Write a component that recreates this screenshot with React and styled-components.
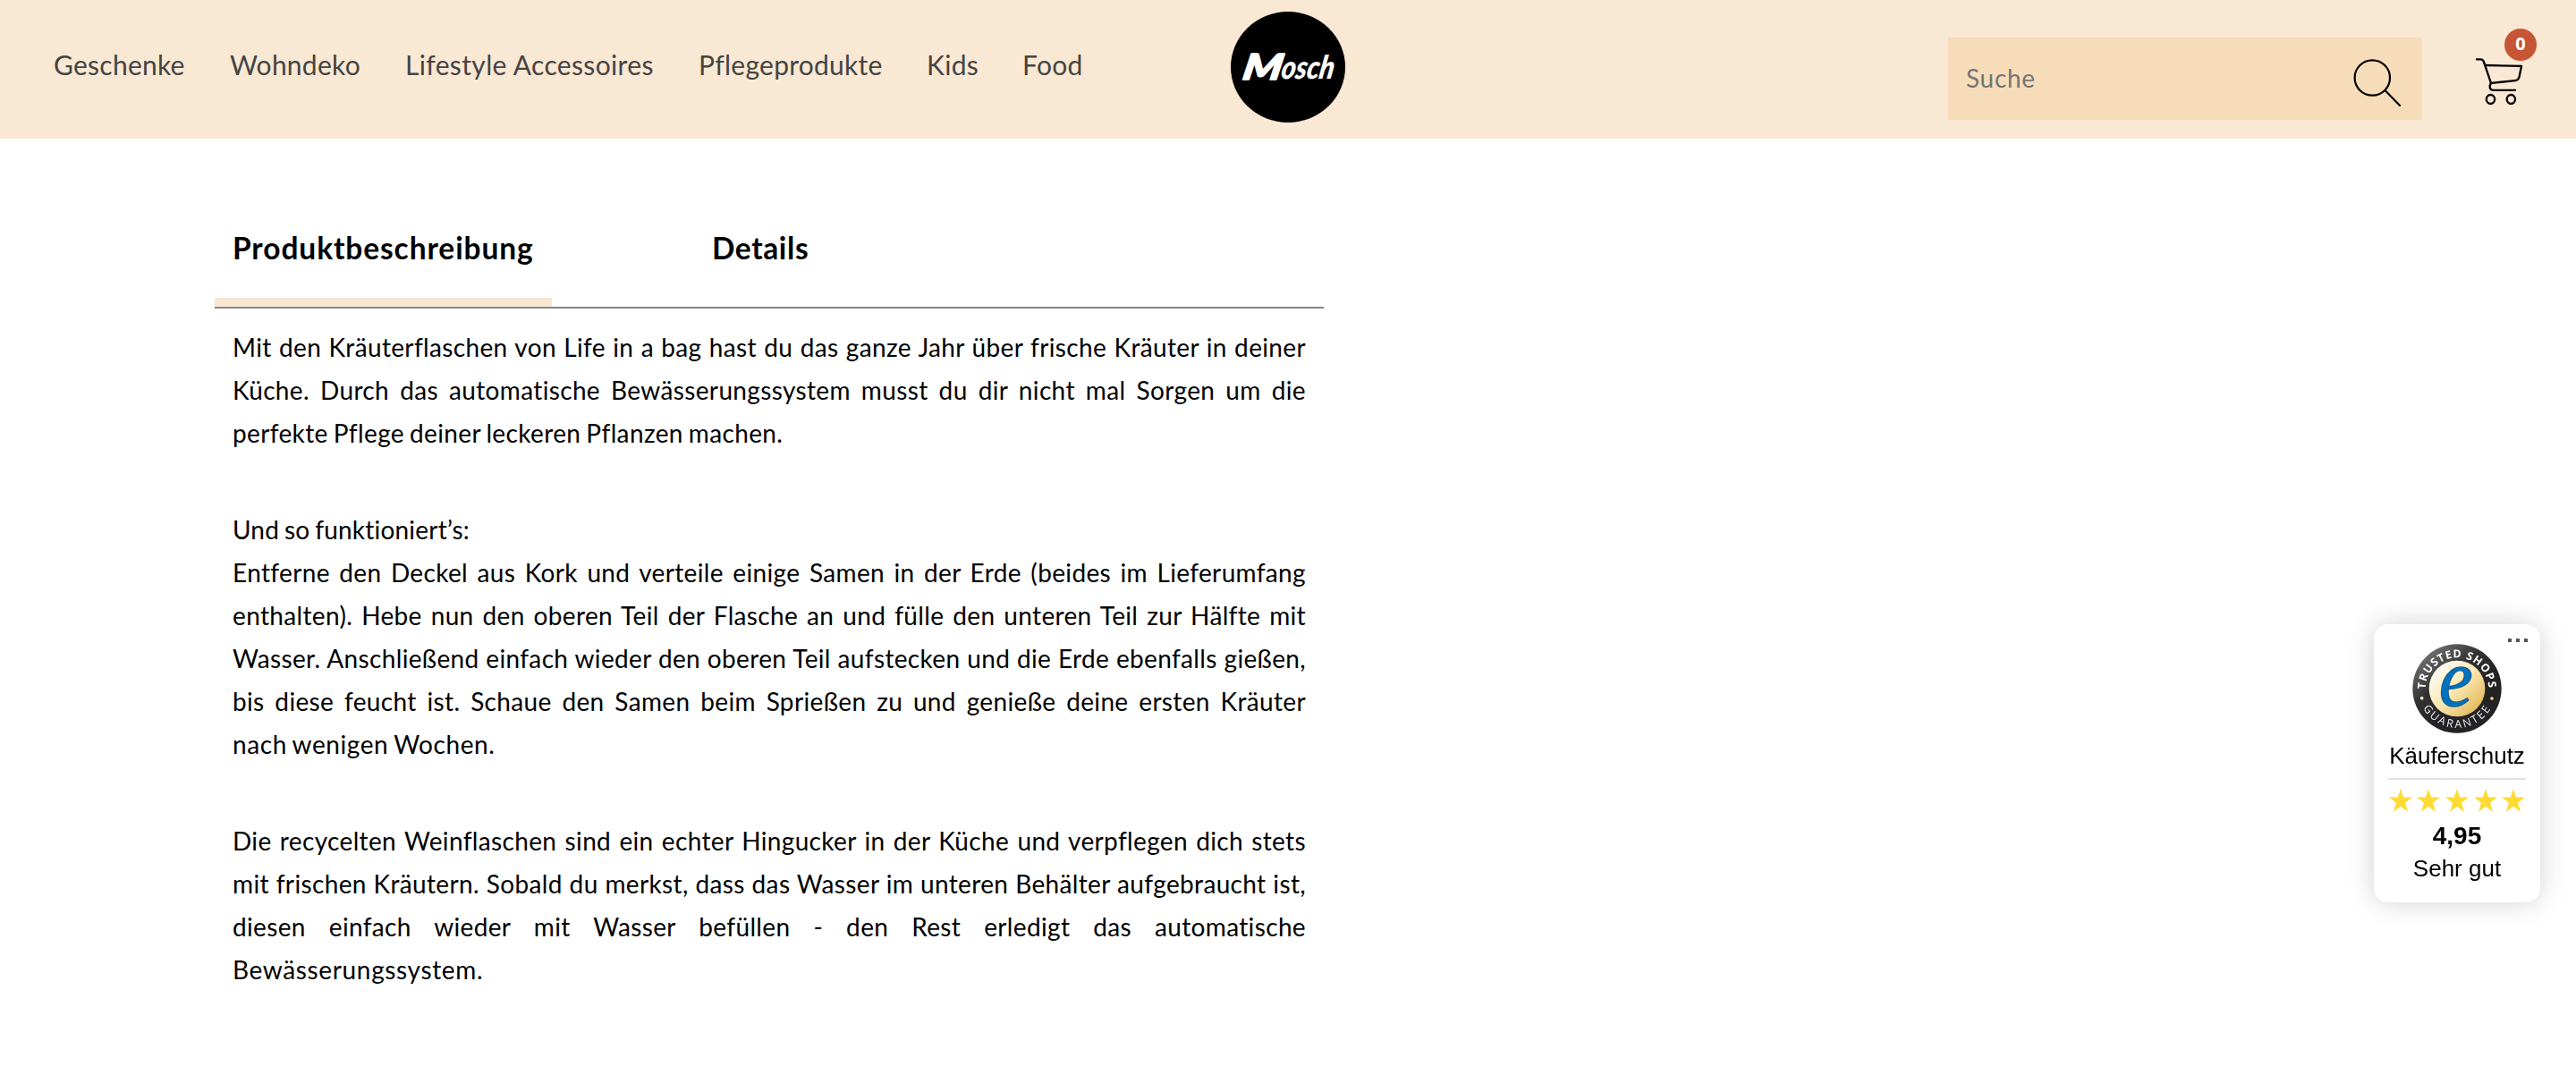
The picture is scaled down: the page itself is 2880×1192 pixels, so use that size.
import React from "react";
import styled, { createGlobalStyle } from "styled-components";

const GlobalStyle = createGlobalStyle`
  *, *::before, *::after { box-sizing: border-box; }
  body {
    margin: 0;
    background: #fff;
    color: #000;
    font-family: Lato, "Open Sans", sans-serif;
  }
`;

const Page = styled.div`
  min-height: 1192px;
`;

const Header = styled.header`
  display: grid;
  grid-template-columns: 1fr 128px 1fr;
  height: 155px;
  background: #f9e8d3;
`;

const Nav = styled.nav`
  display: grid;
  grid-template-columns: 197px 196px 328px 255px 107px 80px;
  align-self: start;
  padding: 48px 0 0 60px;
`;

const NavLink = styled.a`
  color: #444;
  font-size: 30px;
  line-height: 48px;
  letter-spacing: ${(p) => p.$spacing}px;
  white-space: nowrap;
`;

const LogoLink = styled.a`
  display: block;
  height: 124px;
  margin-top: 13px;
`;

const Tools = styled.div`
  display: flex;
  justify-content: flex-end;
  align-items: flex-start;
  padding: 42px 57px 0 0;
`;

const SearchBox = styled.form`
  display: flex;
  align-items: center;
  justify-content: space-between;
  width: 530px;
  height: 92px;
  margin-right: 59px;
  padding: 0 22px 0 20px;
  background: #f7dcba;
`;

const SearchInput = styled.input`
  flex: 1;
  min-width: 0;
  height: 40px;
  margin-bottom: 2px;
  padding: 0;
  border: 0;
  outline: 0;
  background: transparent;
  font: 400 28px Lato, sans-serif;
  letter-spacing: 0.7px;
  &::placeholder { color: #757575; opacity: 1; }
`;

const SearchIcon = styled.svg`
  width: 56px;
  height: 56px;
  margin-top: 8px;
`;

const Cart = styled.a`
  position: relative;
  width: 56px;
  height: 56px;
  margin-top: 21px;
`;

const CartBadge = styled.span`
  position: absolute;
  top: -31px;
  right: -13px;
  display: flex;
  align-items: center;
  justify-content: center;
  width: 36px;
  height: 36px;
  border-radius: 50%;
  background: #c65536;
  color: #fff;
  font: 700 20px/34px "Open Sans", sans-serif;
  padding-bottom: 2px;
`;

const Product = styled.main`
  width: 1240px;
  margin: 0 0 0 240px;
  padding-top: 83px;
`;

const Tabs = styled.div`
  display: flex;
  height: 107px;
  gap: 159px;
  border-bottom: 2px solid #868686;
`;

const Tab = styled.button`
  width: ${(p) => p.$width}px;
  padding: 17px 20px 0;
  border: 0;
  border-bottom: 10px solid ${(p) => (p.$active ? "#f9e8d3" : "transparent")};
  background: none;
  color: #000;
  font: 700 33.5px/44px Lato, sans-serif;
  letter-spacing: ${(p) => p.$spacing}px;
  text-align: left;
  white-space: nowrap;
  display: flex;
  align-items: flex-start;
`;

const Description = styled.article`
  display: flex;
  flex-direction: column;
  gap: 60px;
  padding: 19px 20px 0;
`;

const Paragraph = styled.p`
  margin: 0;
  font-size: 28px;
  line-height: 48px;
`;

const Line = styled.span`
  display: block;
  letter-spacing: ${(p) => p.$spacing}px;
  word-spacing: -1.5px;
  white-space: nowrap;
  text-align: left;
  text-align-last: ${(p) => (p.$full ? "justify" : "left")};
`;

const TrustCard = styled.aside`
  position: fixed;
  top: 698px;
  right: 40px;
  display: flex;
  flex-direction: column;
  align-items: center;
  width: 186px;
  height: 311px;
  border-radius: 16px;
  background: #fff;
  box-shadow: 0 0 30px rgba(0, 0, 0, 0.18);
  font-family: "Liberation Sans", Arial, sans-serif;
`;

const Menu = styled.div`
  display: flex;
  align-self: flex-end;
  gap: 5px;
  height: 4px;
  margin: 16px 14px 0 0;
`;

const MenuDot = styled.i`
  width: 4px;
  height: 4px;
  background: #555;
`;

const Seal = styled.svg`
  width: 100px;
  height: 100px;
  margin-top: 2px;
`;

const SealCaption = styled.div`
  margin-top: 9px;
  font-size: 26px;
  line-height: 32px;
`;

const Divider = styled.hr`
  width: 154px;
  height: 2px;
  margin: 9px 0 10px;
  border: 0;
  background: #e1e1e1;
`;

const Stars = styled.div`
  display: flex;
  gap: 5.6px;
`;

const Star = styled.svg`
  width: 26px;
  height: 26px;
  fill: #ffdb33;
`;

const Score = styled.div`
  margin-top: 10px;
  font-size: 28px;
  font-weight: 700;
  line-height: 34px;
`;

const Grade = styled.div`
  margin-top: 3px;
  font-size: 26px;
  line-height: 32px;
`;

const links = [
  ["Geschenke", 0.25],
  ["Wohndeko", 0.25],
  ["Lifestyle Accessoires", 0.35],
  ["Pflegeprodukte", 0.25],
  ["Kids", 0.3],
  ["Food", 0.3],
];

const paragraphs = [
  [
    { text: "Mit den Kräuterflaschen von Life in a bag hast du das ganze Jahr über frische Kräuter in deiner", full: true },
    { text: "Küche. Durch das automatische Bewässerungssystem musst du dir nicht mal Sorgen um die", full: true },
    { text: "perfekte Pflege deiner leckeren Pflanzen machen.", spacing: 0.36 },
  ],
  [
    { text: "Und so funktioniert’s:", spacing: 0.2 },
    { text: "Entferne den Deckel aus Kork und verteile einige Samen in der Erde (beides im Lieferumfang", full: true },
    { text: "enthalten). Hebe nun den oberen Teil der Flasche an und fülle den unteren Teil zur Hälfte mit", full: true },
    { text: "Wasser. Anschließend einfach wieder den oberen Teil aufstecken und die Erde ebenfalls gießen,", full: true },
    { text: "bis diese feucht ist. Schaue den Samen beim Sprießen zu und genieße deine ersten Kräuter", full: true },
    { text: "nach wenigen Wochen.", spacing: 0.58 },
  ],
  [
    { text: "Die recycelten Weinflaschen sind ein echter Hingucker in der Küche und verpflegen dich stets", full: true },
    { text: "mit frischen Kräutern. Sobald du merkst, dass das Wasser im unteren Behälter aufgebraucht ist,", full: true },
    { text: "diesen einfach wieder mit Wasser befüllen - den Rest erledigt das automatische", full: true },
    { text: "Bewässerungssystem.", spacing: 0.64 },
  ],
];

function Logo() {
  return (
    <svg width="128" height="124" viewBox="0 0 128 124">
      <ellipse cx="64" cy="62" rx="64" ry="62" fill="#000" />
      <g
        fill="#fff"
        stroke="#fff"
        strokeLinejoin="round"
        fontFamily="Lato, sans-serif"
        fontStyle="italic"
        fontWeight="900"
        transform="translate(0 76) skewX(-10)"
      >
        <text x="12" y="0" fontSize="40" strokeWidth="1.6" textLength="44" lengthAdjust="spacingAndGlyphs">M</text>
        <text x="55" y="-1" fontSize="36" strokeWidth="0.2" textLength="59" lengthAdjust="spacingAndGlyphs">osch</text>
      </g>
    </svg>
  );
}

function CartIcon() {
  return (
    <svg width="56" height="56" viewBox="471 129 168 168" fill="none" stroke="#000" strokeWidth="7" strokeLinecap="round" strokeLinejoin="round">
      <path d="M477 139h14q7 0 10 9l24 71" />
      <path d="M507 159l120 2.5-7 35q-3 13-15 14l-78 8q-6 3-6 12 0 12 12 12h73" />
      <ellipse cx="523.5" cy="273" rx="14" ry="15" />
      <ellipse cx="592" cy="273" rx="14" ry="15" />
    </svg>
  );
}

function TrustSeal() {
  return (
    <Seal viewBox="-150 -150 300 300">
      <defs>
        <linearGradient id="ring" x1="0.15" y1="0.05" x2="0.6" y2="0.6">
          <stop offset="0" stopColor="#777" />
          <stop offset="0.55" stopColor="#333" />
          <stop offset="1" stopColor="#232326" />
        </linearGradient>
        <linearGradient id="gold" x1="0.1" y1="0.15" x2="0.9" y2="0.9">
          <stop offset="0" stopColor="#fffdf8" />
          <stop offset="0.5" stopColor="#fbe6ad" />
          <stop offset="1" stopColor="#dfb654" />
        </linearGradient>
        <path id="arcTop" d="M-106 2A106 106 0 0 1 106 2" />
        <path id="arcBottom" d="M-114 66A132 132 0 0 0 114 66" />
      </defs>
      <circle r="149" fill="url(#ring)" />
      <circle r="94" fill="url(#gold)" />
      <g fill="#fff" fontFamily="Open Sans, sans-serif" fontSize="37">
        <text fontWeight="700" textLength="328">
          <textPath href="#arcTop" textLength="328">TRUSTED SHOPS</textPath>
        </text>
        <text fill="#eee" textLength="272">
          <textPath href="#arcBottom" textLength="272">GUARANTEE</textPath>
        </text>
      </g>
      <circle cx="-118" cy="32" r="5.5" fill="#f7edc4" />
      <circle cx="117" cy="33" r="5.5" fill="#f2df7c" />
      <text
        transform="translate(-4 58) scale(0.92 1)"
        fontFamily="Liberation Serif, serif"
        fontStyle="italic"
        fontSize="276"
        textAnchor="middle"
        fill="#0071bb"
        stroke="#1b4c7c"
        strokeWidth="5"
        paintOrder="stroke"
      >
        e
      </text>
    </Seal>
  );
}

export default function App() {
  return (
    <Page>
      <GlobalStyle />
      <Header>
        <Nav>
          {links.map(([label, spacing]) => (
            <NavLink key={label} $spacing={spacing}>{label}</NavLink>
          ))}
        </Nav>
        <LogoLink aria-label="Mosch">
          <Logo />
        </LogoLink>
        <Tools>
          <SearchBox>
            <SearchInput placeholder="Suche" />
            <SearchIcon viewBox="0 0 56 56" fill="none" stroke="#000" strokeWidth="2.2" strokeLinecap="round">
              <circle cx="22.3" cy="23" r="19.7" />
              <path d="M36.5 37L53 54" />
            </SearchIcon>
          </SearchBox>
          <Cart>
            <CartIcon />
            <CartBadge>0</CartBadge>
          </Cart>
        </Tools>
      </Header>

      <Product>
        <Tabs>
          <Tab $active $width={377} $spacing={0.9}>Produktbeschreibung</Tab>
          <Tab $width={150} $spacing={0.6}>Details</Tab>
        </Tabs>
        <Description>
          {paragraphs.map((lines, n) => (
            <Paragraph key={n}>
              {lines.map(({ text, full, spacing = 0.35 }) => (
                <Line key={text} $full={full} $spacing={spacing}>{text}</Line>
              ))}
            </Paragraph>
          ))}
        </Description>
      </Product>

      <TrustCard>
        <Menu>
          <MenuDot />
          <MenuDot />
          <MenuDot />
        </Menu>
        <TrustSeal />
        <SealCaption>Käuferschutz</SealCaption>
        <Divider />
        <Stars>
          {[1, 2, 3, 4, 5].map((n) => (
            <Star key={n} viewBox="0 0 26 26">
              <path d="M13 0l3.2 9.6H26l-8 6.2 3 10-8-6-8 6 3-10L0 9.6h9.8z" />
            </Star>
          ))}
        </Stars>
        <Score>4,95</Score>
        <Grade>Sehr gut</Grade>
      </TrustCard>
    </Page>
  );
}
